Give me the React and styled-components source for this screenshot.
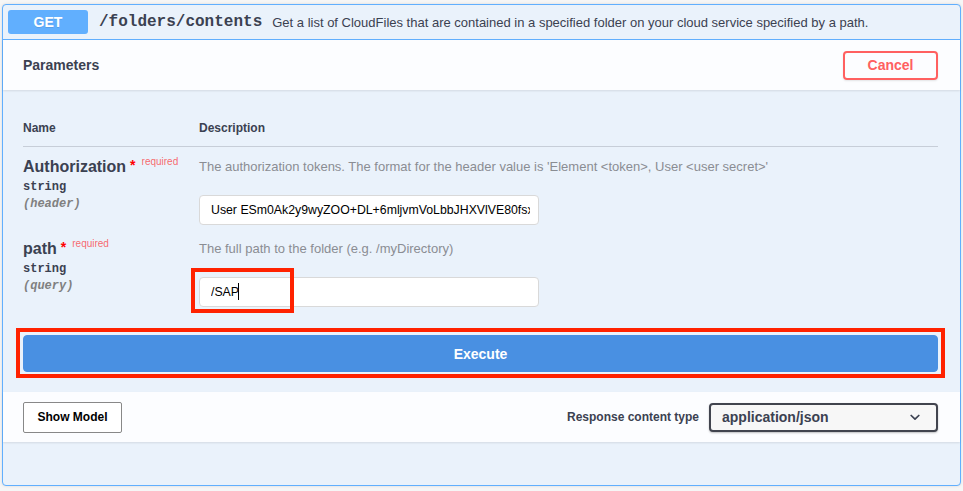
import React from "react";
import styled, { createGlobalStyle } from "styled-components";

const Global = createGlobalStyle`
  html, body { margin: 0; padding: 0; background: #f6f6f6; }
  body { font-family: "Liberation Sans", Arial, sans-serif; color: #3b4151; }
  * { box-sizing: border-box; }
`;

const Page = styled.div`
  padding: 4px 2px 4px 2px;
  width: 963px;
`;

const Block = styled.section`
  border: 1px solid #61affe;
  border-radius: 4px;
  background: #eaf2fb;
  box-shadow: 0 0 3px rgba(0, 0, 0, 0.12);
  padding-bottom: 43px;
`;

const Header = styled.div`
  display: flex;
  align-items: center;
  height: 35px;
  padding: 5px;
  border-bottom: 1px solid #61affe;
`;

const Method = styled.span`
  display: inline-block;
  min-width: 80px;
  height: 24px;
  line-height: 24px;
  text-align: center;
  border-radius: 3px;
  background: #61affe;
  color: #fff;
  font-weight: 700;
  font-size: 14px;
  text-shadow: 0 1px 0 rgba(0, 0, 0, 0.1);
`;

const PathText = styled.span`
  padding: 0 10px 0 11px;
  font-family: "Liberation Mono", "DejaVu Sans Mono", monospace;
  font-weight: 700;
  font-size: 16px;
  color: #3b4151;
`;

const Summary = styled.span`
  font-size: 13px;
  color: #3b4151;
`;

const SectionBar = styled.div`
  display: flex;
  align-items: center;
  justify-content: space-between;
  height: 50px;
  padding: 0 22px 0 20px;
  background: rgba(255, 255, 255, 0.85);
  box-shadow: 0 1px 2px rgba(0, 0, 0, 0.1);
`;

const SectionTitle = styled.h4`
  margin: 0;
  font-size: 14px;
  font-weight: 700;
  color: #3b4151;
`;

const CancelButton = styled.button`
  width: 95px;
  height: 29px;
  border: 2px solid #ff6060;
  border-radius: 4px;
  background: transparent;
  color: #ff6060;
  font-family: inherit;
  font-size: 14px;
  font-weight: 700;
  box-shadow: 0 1px 2px rgba(0, 0, 0, 0.1);
`;

const Body = styled.div`
  padding: 30px 22px 20px 20px;
`;

const Grid = styled.div`
  display: grid;
  grid-template-columns: 176px 1fr;
`;

const HeadCell = styled.div`
  font-size: 12px;
  font-weight: 700;
  line-height: 16px;
  padding-bottom: 10px;
  border-bottom: 1px solid rgba(59, 65, 81, 0.2);
  color: #3b4151;
`;

const Cell = styled.div`
  padding: 10px 0 4px 0;
`;

const ParamName = styled.div`
  font-size: 16px;
  font-weight: 700;
  line-height: 20px;
  color: #3b4151;
  white-space: nowrap;
`;

const Star = styled.span`
  color: red;
  font-size: 14px;
  margin-left: 4px;
  position: relative;
  top: -2px;
`;

const Required = styled.span`
  font-size: 10px;
  color: rgba(255, 0, 0, 0.6);
  position: relative;
  top: -7px;
  margin-left: 6px;
  font-weight: 400;
`;

const ParamType = styled.div`
  font-family: "Liberation Mono", "DejaVu Sans Mono", monospace;
  font-size: 12px;
  font-weight: 700;
  line-height: 17px;
  color: #3b4151;
`;

const ParamIn = styled.div`
  font-family: "Liberation Mono", "DejaVu Sans Mono", monospace;
  font-size: 12px;
  font-weight: 700;
  font-style: italic;
  line-height: 17px;
  color: #808080;
`;

const Desc = styled.p`
  margin: 0;
  font-size: 13px;
  line-height: 20px;
  color: #8a8d93;
  white-space: nowrap;
`;

const Field = styled.div`
  position: relative;
  width: 340px;
  margin-top: 18px;
`;

const TextInput = styled.input`
  display: block;
  width: 340px;
  height: 30px;
  padding: 0 8px 0 11px;
  border: 1px solid #d9d9d9;
  border-radius: 4px;
  background: #fff;
  font-family: "Liberation Sans", Arial, sans-serif;
  font-size: 12.3px;
  color: #000;
  outline: none;
`;

const Highlight = styled.div`
  position: absolute;
  left: -8px;
  top: -9px;
  width: 103px;
  height: 45px;
  border: 4px solid #ff2200;
  pointer-events: none;
`;

const Caret = styled.span`
  position: absolute;
  left: 39px;
  top: 6px;
  width: 1px;
  height: 17px;
  background: #000;
`;

const ExecuteWrap = styled.div`
  position: relative;
  margin-top: 24px;
  &::after {
    content: "";
    position: absolute;
    inset: -7px -7px -6px -7px;
    border: 4px solid #ff2200;
    pointer-events: none;
  }
`;

const ExecuteButton = styled.button`
  display: block;
  width: 100%;
  height: 37px;
  border: 1px solid #4990e2;
  border-radius: 4px;
  background: #4990e2;
  color: #fff;
  font-family: inherit;
  font-size: 14px;
  font-weight: 700;
`;

const Footer = styled.div`
  display: flex;
  align-items: center;
  justify-content: space-between;
  height: 50px;
  padding: 0 22px 0 20px;
  background: rgba(255, 255, 255, 0.85);
  box-shadow: 0 1px 2px rgba(0, 0, 0, 0.1);
`;

const ModelButton = styled.button`
  width: 99px;
  height: 31px;
  border: 1px solid #888;
  border-radius: 2px;
  background: #fff;
  color: #000;
  font-family: inherit;
  font-size: 12px;
  font-weight: 700;
`;

const ContentType = styled.label`
  display: flex;
  align-items: center;
  gap: 10px;
  font-size: 12px;
  font-weight: 700;
  color: #3b4151;
`;

const Select = styled.div`
  display: flex;
  align-items: center;
  justify-content: space-between;
  width: 229px;
  height: 29px;
  padding: 0 16px 0 11px;
  border: 2px solid #41444e;
  border-radius: 4px;
  background: #f7f7f7;
  box-shadow: 0 1px 2px rgba(0, 0, 0, 0.25);
  font-size: 14px;
  font-weight: 700;
  color: #3b4151;
`;

const params = [
  {
    name: "Authorization",
    type: "string",
    where: "(header)",
    desc: "The authorization tokens. The format for the header value is 'Element <token>, User <user secret>'",
    value: "User ESm0Ak2y9wyZOO+DL+6mljvmVoLbbJHXVlVE80fsxFq7Qa=, Element 9f3b",
    highlight: false,
  },
  {
    name: "path",
    type: "string",
    where: "(query)",
    desc: "The full path to the folder (e.g. /myDirectory)",
    value: "/SAP",
    highlight: true,
  },
];

export default function App() {
  return (
    <Page>
      <Global />
      <Block>
        <Header>
          <Method>GET</Method>
          <PathText>/folders/contents</PathText>
          <Summary>
            Get a list of CloudFiles that are contained in a specified folder on your cloud service specified by a path.
          </Summary>
        </Header>
        <SectionBar>
          <SectionTitle>Parameters</SectionTitle>
          <CancelButton>Cancel</CancelButton>
        </SectionBar>
        <Body>
          <Grid>
            <HeadCell>Name</HeadCell>
            <HeadCell>Description</HeadCell>
            {params.map((p) => (
              <React.Fragment key={p.name}>
                <Cell>
                  <ParamName>
                    {p.name}
                    <Star>*</Star>
                    <Required>required</Required>
                  </ParamName>
                  <ParamType>{p.type}</ParamType>
                  <ParamIn>{p.where}</ParamIn>
                </Cell>
                <Cell>
                  <Desc>{p.desc}</Desc>
                  <Field>
                    <TextInput readOnly value={p.value} />
                    {p.highlight && (
                      <>
                        <Caret />
                        <Highlight />
                      </>
                    )}
                  </Field>
                </Cell>
              </React.Fragment>
            ))}
          </Grid>
          <ExecuteWrap>
            <ExecuteButton>Execute</ExecuteButton>
          </ExecuteWrap>
        </Body>
        <Footer>
          <ModelButton>Show Model</ModelButton>
          <ContentType>
            Response content type
            <Select>
              application/json
              <svg width="10" height="7" viewBox="0 0 10 7" fill="none">
                <path d="M1.2 1.5 L5 5.2 L8.8 1.5" stroke="#3b4151" strokeWidth="1.7" strokeLinecap="round" strokeLinejoin="round" />
              </svg>
            </Select>
          </ContentType>
        </Footer>
      </Block>
    </Page>
  );
}
